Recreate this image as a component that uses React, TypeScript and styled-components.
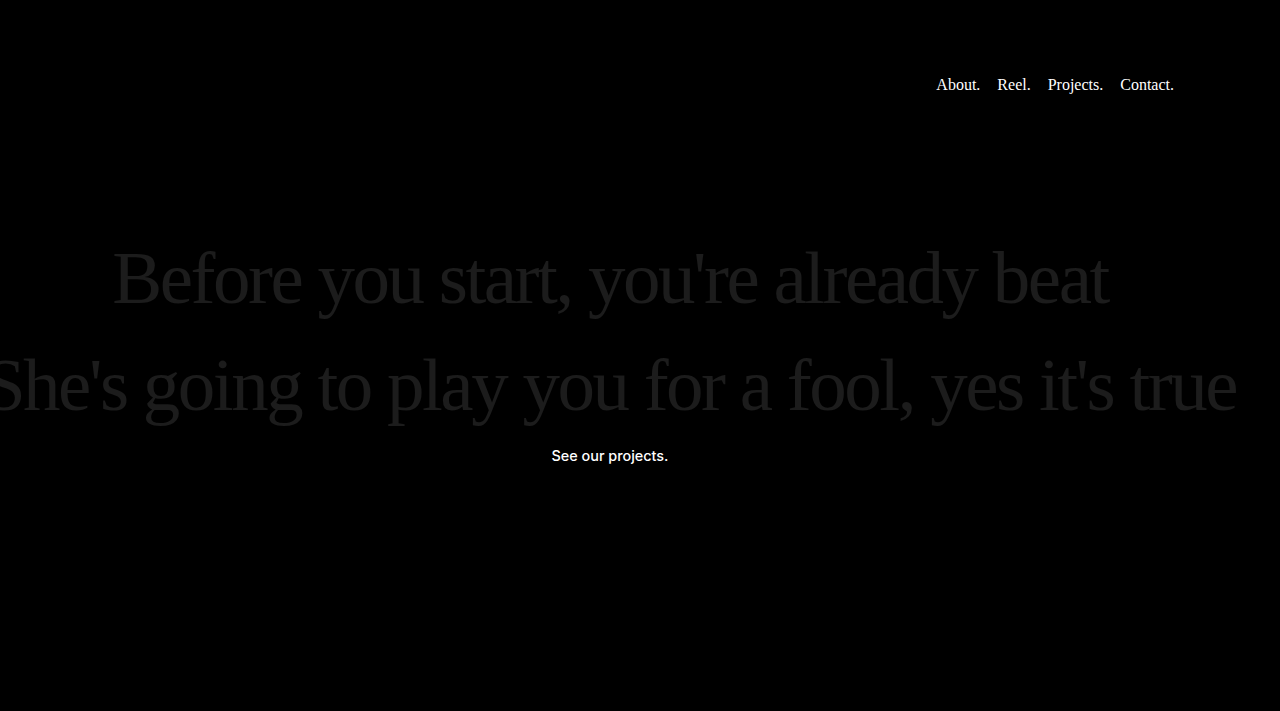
import React from "react";
import styled, { createGlobalStyle } from "styled-components";

const Global = createGlobalStyle`
  html, body { margin: 0; padding: 0; background: #000; }
  body { width: 1280px; height: 711px; overflow: hidden; }
`;

const Page = styled.div`
  width: 1280px;
  height: 711px;
  background: #000;
  display: flex;
  flex-direction: column;
  overflow: hidden;
`;

const Header = styled.header`
  display: flex;
  justify-content: flex-end;
  padding: 74px 106px 0 0;
  height: 30px;
`;

const Nav = styled.nav`
  display: flex;
  gap: 17px;
`;

const NavLink = styled.a`
  font-family: "Liberation Serif", "Times New Roman", serif;
  font-size: 16px;
  color: #fff;
  text-decoration: none;
  line-height: 22px;
`;

const Hero = styled.section`
  width: 1220px;
  margin-top: 120px;
  display: flex;
  flex-direction: column;
  align-items: center;
`;

const Line = styled.div`
  font-family: "Liberation Serif", "Times New Roman", serif;
  font-size: 75px;
  line-height: 107px;
  color: #1c1c1c;
  white-space: nowrap;
  letter-spacing: -2.5px;
`;

const Cta = styled.a`
  margin-top: 9px;
  font-family: "Inter", "Liberation Sans", sans-serif;
  font-weight: 500;
  font-size: 14.4px;
  color: #fff;
  text-decoration: none;
`;

export default function App() {
  return (
    <Page>
      <Global />
      <Header>
        <Nav>
          <NavLink href="#">About.</NavLink>
          <NavLink href="#">Reel.</NavLink>
          <NavLink href="#">Projects.</NavLink>
          <NavLink href="#">Contact.</NavLink>
        </Nav>
      </Header>
      <Hero>
        <Line>Before you start, you're already beat</Line>
        <Line>She's going to play you for a fool, yes it's true</Line>
        <Cta href="#">See our projects.</Cta>
      </Hero>
    </Page>
  );
}
